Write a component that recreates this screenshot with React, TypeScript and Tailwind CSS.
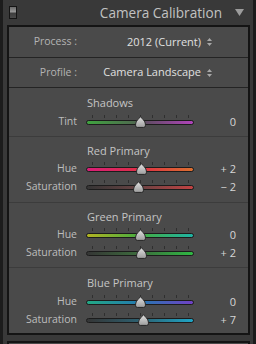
import React from 'react';

type Slider = { label: string; value: number; text: string; track: string };
type Section = { title: string; box: string; gap: string; sliders: Slider[] };

const sections: Section[] = [
  {
    title: 'Shadows',
    box: 'pt-[8px] pb-[5px]',
    gap: 'mt-[3px]',
    sliders: [
      { label: 'Tint', value: 0, text: '0', track: 'bg-[linear-gradient(90deg,#3fa33f,#4f6a4f_45%,#5f4d62_55%,#b043ba)]' },
    ],
  },
  {
    title: 'Red Primary',
    box: 'pt-[7px] pb-[6px]',
    gap: 'mt-[2px]',
    sliders: [
      { label: 'Hue', value: 2, text: '+ 2', track: 'bg-[linear-gradient(90deg,#d81f78,#de2f45_50%,#dc7030)]' },
      { label: 'Saturation', value: -2, text: '\u2212 2', track: 'bg-[linear-gradient(90deg,#353535,#6a4343_50%,#c24242)]' },
    ],
  },
  {
    title: 'Green Primary',
    box: 'pt-[7px] pb-[5px]',
    gap: 'mt-[2px]',
    sliders: [
      { label: 'Hue', value: 0, text: '0', track: 'bg-[linear-gradient(90deg,#b2b322,#45ad40_50%,#1fb3a4)]' },
      { label: 'Saturation', value: 2, text: '+ 2', track: 'bg-[linear-gradient(90deg,#353535,#3d6d3d_50%,#2fb843)]' },
    ],
  },
  {
    title: 'Blue Primary',
    box: 'pt-[8px] pb-[4px]',
    gap: 'mt-[3px]',
    sliders: [
      { label: 'Hue', value: 0, text: '0', track: 'bg-[linear-gradient(90deg,#22a884,#2479b0_50%,#7040c4)]' },
      { label: 'Saturation', value: 7, text: '+ 7', track: 'bg-[linear-gradient(90deg,#353535,#2d6070_50%,#1fa5c6)]' },
    ],
  },
];

const ticks = [0, 1, 2, 3, 4, 5, 6, 7, 8];

function UpDown() {
  return (
    <svg width="5" height="8" viewBox="0 0 5 8" className="ml-[6px]">
      <path d="M2.5 0 L5 3 L0 3 Z" fill="#a8a8a8" />
      <path d="M0 5 L5 5 L2.5 8 Z" fill="#a8a8a8" />
    </svg>
  );
}

function Thumb() {
  return (
    <svg width="11" height="12" viewBox="0 0 11 12">
      <defs>
        <linearGradient id="thumbFill" x1="0" y1="0" x2="0" y2="1">
          <stop offset="0" stopColor="#e2e2e2" />
          <stop offset="1" stopColor="#9c9c9c" />
        </linearGradient>
      </defs>
      <path
        d="M5.5 0.6 C6.6 2.4 10.4 5 10.4 8 L10.4 9.8 Q10.4 11.4 8.8 11.4 L2.2 11.4 Q0.6 11.4 0.6 9.8 L0.6 8 C0.6 5 4.4 2.4 5.5 0.6 Z"
        fill="url(#thumbFill)"
        stroke="#262626"
        strokeWidth="1"
      />
    </svg>
  );
}

function SliderRow({ s }: { s: Slider }) {
  const left = 54 + s.value * 0.54 - 5.5;
  return (
    <div className="flex h-[18px] items-center">
      <div className="w-[68px] text-right text-[10.5px] text-[#bdbdbd]">{s.label}</div>
      <div className="relative ml-[9px] h-[5px] w-[108px]">
        {ticks.map((t) => (
          <div
            key={t}
            className="absolute top-[-5px] h-[3px] w-px bg-[#2f2f2f]"
            style={{ left: 6 + t * 12 }}
          />
        ))}
        <div className={`h-[5px] w-full rounded-full border border-[#1c1c1c] ${s.track}`} />
        <div className="absolute top-[-4px]" style={{ left }}>
          <Thumb />
        </div>
      </div>
      <div className="w-[42px] text-right text-[11px] text-[#d6d6d6]">{s.text}</div>
    </div>
  );
}

export default function App() {
  return (
    <div
      className="h-[344px] w-[256px] overflow-hidden bg-[#1c1c1c] px-[3px] antialiased"
      style={{ fontFamily: '"Open Sans", "DejaVu Sans", sans-serif' }}
    >
      <div className="h-full bg-[#393939] pl-[4px] pr-[3px]">
        <div className="flex h-[25px] items-center">
          <div className="ml-[2px] h-[13px] w-[8px] border border-[#151515] bg-[linear-gradient(180deg,#6a6a6a,#9a9a9a_45%,#3e3e3e_55%,#4a4a4a)]" />
          <div className="ml-auto text-[13.6px] leading-none text-[#c2c2c2]">Camera Calibration</div>
          <svg width="9" height="7" viewBox="0 0 9 7" className="ml-[13px] mr-[6px]">
            <path d="M0 0 L9 0 L4.5 7 Z" fill="#9c9c9c" />
          </svg>
        </div>

        <div className="border-2 border-[#141414] bg-[#4a4a4a]">
          <div className="flex h-[30px] items-center">
            <div className="w-[68px] text-right text-[10.5px] text-[#b4b4b4]">Process :</div>
            <div className="w-[124px] text-right text-[11px] text-[#e0e0e0]">2012 (Current)</div>
            <UpDown />
          </div>
          <div className="h-px bg-[#242424]" />
          <div className="flex h-[29px] items-center">
            <div className="w-[68px] text-right text-[10.5px] text-[#b4b4b4]">Profile :</div>
            <div className="w-[124px] text-right text-[11px] text-[#e0e0e0]">Camera Landscape</div>
            <UpDown />
          </div>
          <div className="h-px bg-[#242424]" />

          {sections.map((sec, i) => (
            <div key={sec.title}>
              {i > 0 && <div className="h-px bg-[#3c3c3c]" />}
              <div className={sec.box}>
                <div className="flex h-[14px] items-center pl-[78px] text-[11px] text-[#c4c4c4]">{sec.title}</div>
                <div className={sec.gap}>
                  {sec.sliders.map((s) => (
                    <SliderRow key={s.label} s={s} />
                  ))}
                </div>
              </div>
            </div>
          ))}
        </div>

        <div className="mt-[6px] h-[10px] border-x-2 border-t-2 border-[#141414] bg-[#4a4a4a]" />
      </div>
    </div>
  );
}
